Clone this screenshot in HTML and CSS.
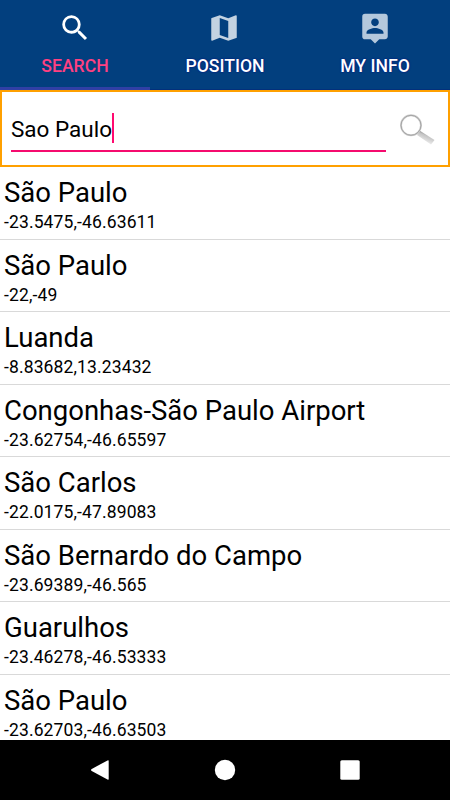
FILE: index.html
```html
<!DOCTYPE html>
<html lang="en">
<head>
<meta charset="utf-8">
<title>Search</title>
<link rel="stylesheet" href="styles.css">
</head>
<body>
<nav class="tabs">
  <div class="tab active">
    <svg class="icon" viewBox="0 0 24 24"><path d="M15.5 14h-.79l-.28-.27A6.47 6.47 0 0 0 16 9.5 6.5 6.5 0 1 0 9.5 16c1.61 0 3.09-.59 4.23-1.57l.27.28v.79l5 4.99L20.49 19l-4.99-5zm-6 0C7.01 14 5 11.99 5 9.5S7.01 5 9.5 5 14 7.01 14 9.5 11.99 14 9.5 14z"/></svg>
    <span>SEARCH</span>
  </div>
  <div class="tab">
    <svg class="icon" viewBox="0 0 24 24"><path d="M20.5 3l-.16.03L15 5.1 9 3 3.36 4.9c-.21.07-.36.25-.36.48V20.5c0 .28.22.5.5.5l.16-.03L9 18.9l6 2.1 5.64-1.9c.21-.07.36-.25.36-.48V3.500c0-.28-.22-.5-.5-.5zM15 19l-6-2.11V5l6 2.11V19z"/></svg>
    <span>POSITION</span>
  </div>
  <div class="tab">
    <svg class="icon" viewBox="0 0 24 24"><path d="M19 2H5a2 2 0 0 0-2 2v14a2 2 0 0 0 2 2h4l3 3 3-3h4c1.100 0 2-.9 2-2V4c0-1.100-.9-2-2-2zm-7 3.300c1.490 0 2.700 1.210 2.700 2.700 0 1.490-1.210 2.700-2.700 2.700-1.490 0-2.700-1.210-2.700-2.700 0-1.490 1.210-2.700 2.700-2.700zM18 16H6v-.9c0-2 4-3.100 6-3.100s6 1.100 6 3.100v.9z"/></svg>
    <span>MY INFO</span>
  </div>
</nav>
<section class="search">
  <div class="field"><span>Sao Paulo</span><i class="caret"></i></div>
  <svg class="lens" viewBox="0 0 38 34">
    <defs><linearGradient id="handle" x1=".65" y1=".2" x2=".35" y2=".8"><stop offset="0" stop-color="#8c8c8c"/><stop offset=".3" stop-color="#c4c4c4"/><stop offset="1" stop-color="#ececec"/></linearGradient></defs>
    <path d="M20.500 17.500l15 9.500-3.500 4.500-14-9.500z" fill="url(#handle)"/>
    <circle cx="12" cy="12.300" r="10" fill="#fff" stroke="#cfcfcf" stroke-width="2"/>
    <circle cx="12" cy="12.300" r="10" fill="none" stroke="#999" stroke-width=".8"/>
  </svg>
</section>
<main class="list">
  <div class="row"><h2>São Paulo</h2><p>-23.5475,-46.63611</p></div>
  <div class="row"><h2>São Paulo</h2><p>-22,-49</p></div>
  <div class="row"><h2>Luanda</h2><p>-8.83682,13.23432</p></div>
  <div class="row"><h2>Congonhas-São Paulo Airport</h2><p>-23.62754,-46.65597</p></div>
  <div class="row"><h2>São Carlos</h2><p>-22.0175,-47.89083</p></div>
  <div class="row"><h2>São Bernardo do Campo</h2><p>-23.69389,-46.565</p></div>
  <div class="row"><h2>Guarulhos</h2><p>-23.46278,-46.53333</p></div>
  <div class="row"><h2>São Paulo</h2><p>-23.62703,-46.63503</p></div>
</main>
<footer class="navbar">
  <svg viewBox="0 0 24 24"><path d="M20.700 3v18q0 1.200-1.200.6L3.700 13q-1.400-1 0-2l15.800-8.600q1.200-.6 1.200.6z"/></svg>
  <svg viewBox="0 0 24 24"><circle cx="12" cy="12" r="10.200"/></svg>
  <svg viewBox="0 0 24 24"><rect x="2.300" y="2.300" width="19.400" height="19.400" rx="1.500"/></svg>
</footer>
</body>
</html>
```
FILE: styles.css
```css
* { box-sizing: border-box; }
body {
  margin: 0;
  width: 450px;
  height: 800px;
  overflow: hidden;
  display: flex;
  flex-direction: column;
  background: #fff;
  color: #000;
  font-family: Roboto, sans-serif;
}
.tabs {
  flex: none;
  height: 90px;
  display: grid;
  grid-template-columns: repeat(3, 1fr);
  background: #023f7e;
}
.tab {
  display: flex;
  flex-direction: column;
  align-items: center;
  padding-top: 11px;
  border-bottom: 1px solid #02307c;
  color: #fff;
  font-size: 17.6px;
  font-weight: 500;
  line-height: 20px;
  text-shadow: 0 0 2px #000080;
}
.tab .icon {
  width: 34px;
  height: 34px;
  margin: 0 1px 11px 0;
  fill: #b4c8dc;
}
.tab:nth-child(2) .icon {
  margin-right: 2px;
  fill: #c3d2e1;
}
.active {
  color: #ff4081;
  border-bottom: 3px solid #303fa5;
  text-shadow: none;
}
.active .icon { fill: #fff; }
.search {
  flex: none;
  height: 77px;
  display: flex;
  border: 2px solid #ffa000;
  padding: 0 5px 0 9px;
}
.field {
  flex: none;
  width: 375px;
  height: 60px;
  display: flex;
  align-items: center;
  padding: 16px 0 0 0;
  border-bottom: 2px solid #f50b6e;
  font-size: 22.5px;
}
.caret {
  width: 2px;
  height: 30px;
  margin-top: -3px;
  background: #ff0a70;
}
.lens {
  flex: none;
  width: 38px;
  height: 34px;
  margin: 21px 0 0 13px;
}
.list {
  flex: 1;
  min-height: 0;
  overflow: hidden;
}
.row {
  height: 72.5px;
  padding: 9px 4px 0;
  border-bottom: 1px solid #d9d9d9;
}
.row h2 {
  margin: 0;
  font-size: 27.5px;
  font-weight: 400;
  line-height: 33px;
}
.row p {
  margin: 3px 0 0;
  font-size: 17.5px;
  line-height: 21px;
  letter-spacing: .13px;
}
.navbar {
  flex: none;
  height: 60px;
  display: flex;
  align-items: center;
  justify-content: space-between;
  padding: 0 88px;
  background: #000;
}
.navbar svg {
  width: 24px;
  height: 24px;
  fill: #fff;
}
```
